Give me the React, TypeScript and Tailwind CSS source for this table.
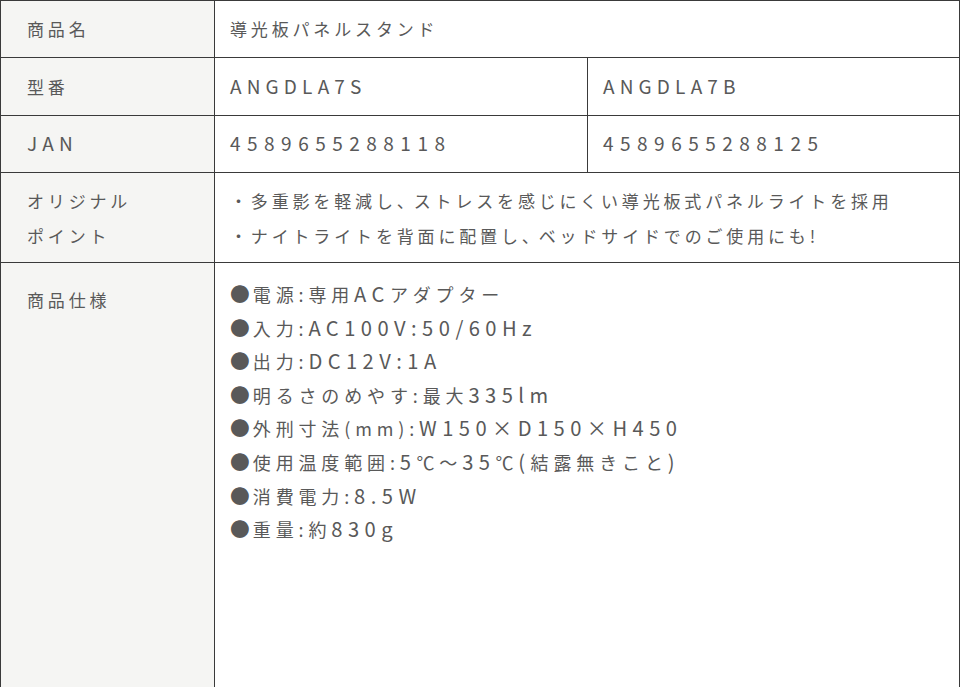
import React from 'react';

// Latin runs are set a little larger and wider, as on the original page
function L({ children }: { children: React.ReactNode }) {
  return <span className="text-[1.12em] leading-none tracking-[0.27em]">{children}</span>;
}

function N({ children }: { children: React.ReactNode }) {
  return <span className="text-[1.12em] leading-none tracking-[0.34em]">{children}</span>;
}

const specs: { label: string; value: React.ReactNode }[] = [
  { label: '電源', value: <>専用<L>AC</L>アダプター</> },
  { label: '入力', value: <L>AC100V:50/60Hz</L> },
  { label: '出力', value: <L>DC12V:1A</L> },
  { label: '明るさのめやす', value: <>最大<L>335lm</L></> },
  { label: '外刑寸法(mm)', value: <L>W150×D150×H450</L> },
  { label: '使用温度範囲', value: <><L>5</L>℃～<L>35</L>℃<L>(</L>結露無きこと<L>)</L></> },
  { label: '消費電力', value: <L>8.5W</L> },
  { label: '重量', value: <>約<L>830g</L></> },
];

const cell = 'border border-[#3a3a3a]';
const head = `${cell} bg-[#f5f5f3] pl-[26px] text-[17px] font-normal text-left`;
const body = `${cell} bg-white pl-[15px] text-[17px]`;

export default function App() {
  return (
    <div className="w-[961px] h-[687px] bg-white overflow-hidden text-[#595959] tracking-[0.24em] font-['Noto_Sans_CJK_JP','Noto_Sans',sans-serif]">
      <table className="w-[960px] border-collapse table-fixed">
        <colgroup>
          <col className="w-[214px]" />
          <col className="w-[373px]" />
          <col />
        </colgroup>
        <tbody>
          <tr className="h-[57px]">
            <th className={`${head} align-middle`}>商品名</th>
            <td className={`${body} align-middle`} colSpan={2}>導光板パネルスタンド</td>
          </tr>
          <tr className="h-[58px]">
            <th className={`${head} align-middle`}>型番</th>
            <td className={`${body} align-middle`}><L>ANGDLA7S</L></td>
            <td className={`${body} align-middle`}><L>ANGDLA7B</L></td>
          </tr>
          <tr className="h-[57px]">
            <th className={`${head} align-middle`}><L>JAN</L></th>
            <td className={`${body} align-middle`}><N>4589655288118</N></td>
            <td className={`${body} align-middle`}><N>4589655288125</N></td>
          </tr>
          <tr className="h-[90px]">
            <th className={`${head} align-middle leading-[35px]`}>
              オリジナル<br />ポイント
            </th>
            <td className={`${body} align-middle leading-[35px]`} colSpan={2}>
              <div>・多重影を軽減し<span className="tracking-normal">、</span>ストレスを感じにくい導光板式パネルライトを採用</div>
              <div>・ナイトライトを背面に配置し<span className="tracking-normal">、</span>ベッドサイドでのご使用にも!</div>
            </td>
          </tr>
          <tr className="h-[425px]">
            <th className={`${head} align-top pt-[20px] leading-[34px]`}>商品仕様</th>
            <td className={`${body} align-top pt-[15px] text-[18px] leading-[33.6px] tracking-[0.27em]`} colSpan={2}>
              {specs.map((s) => (
                <div key={s.label}>
                  <span className="text-[1.1em] leading-none tracking-[0.15em]">●</span>
                  {s.label}:{s.value}
                </div>
              ))}
            </td>
          </tr>
        </tbody>
      </table>
    </div>
  );
}
